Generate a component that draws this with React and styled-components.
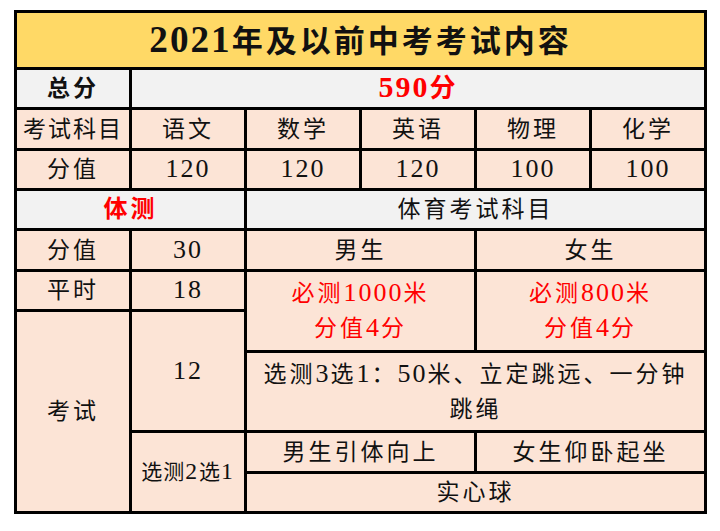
import React from 'react';
import styled, { createGlobalStyle } from 'styled-components';

const GlobalStyle = createGlobalStyle`
  html, body {
    margin: 0;
    padding: 0;
    background: #ffffff;
  }
  body {
    font-family: "Liberation Serif", "Noto Sans CJK SC", serif;
  }
`;

const TONES = {
  title: '#ffd966',
  grey: '#f2f2f2',
  peach: '#fce4d6',
};

const Table = styled.div`
  margin: 10px 0 0 14px;
  width: 693px;
  box-sizing: border-box;
  display: grid;
  grid-template-columns: repeat(6, 1fr);
  grid-template-rows: 54px 37px 38px 37px 37px 38px 37px 38px 77px 38px 37px;
  gap: 3px;
  padding: 3px;
  background: #000000;
`;

const CellBox = styled.div`
  grid-column: ${(p) => p.$col || 'auto'};
  grid-row: ${(p) => p.$row || 'auto'};
  background: ${(p) => TONES[p.$tone || 'peach']};
  color: ${(p) => (p.$red ? '#ff0000' : '#111111')};
  font-size: ${(p) => p.$size || 23}px;
  font-weight: ${(p) => (p.$bold ? 700 : 400)};
  letter-spacing: ${(p) => (p.$spacing != null ? p.$spacing : 3)}px;
  line-height: 35px;
  display: flex;
  align-items: center;
  justify-content: center;
  text-align: center;
  padding: 0 6px;
  white-space: nowrap;
`;

const CellText = styled.span`
  display: block;
`;

// digits in the sheet are set larger than the hanzi
const Num = styled.span`
  font-size: ${(p) => p.$scale || 1.13}em;
  letter-spacing: 2px;
  line-height: 1;
`;

const Cell = ({ children, ...props }) => (
  <CellBox {...props}>
    <CellText>{children}</CellText>
  </CellBox>
);

const nums = (text, scale) =>
  text.split(/(\d+)/).map((part, i) =>
    /^\d+$/.test(part) ? (
      <Num key={i} $scale={scale}>
        {part}
      </Num>
    ) : (
      part
    )
  );

const subjects = [
  { name: '语文', score: '120' },
  { name: '数学', score: '120' },
  { name: '英语', score: '120' },
  { name: '物理', score: '100' },
  { name: '化学', score: '100' },
];

export default function App() {
  return (
    <>
      <GlobalStyle />
      <Table>
        <Cell $col="1 / 7" $tone="title" $size={31} $bold $spacing={3}>
          {nums('2021年及以前中考考试内容', 1.2)}
        </Cell>

        <Cell $tone="grey" $bold>总分</Cell>
        <Cell $col="2 / 7" $tone="grey" $red $bold $size={26} $spacing={2}>
          {nums('590分', 1.15)}
        </Cell>

        <Cell $spacing={2}>考试科目</Cell>
        {subjects.map((s) => (
          <Cell key={s.name}>{s.name}</Cell>
        ))}

        <Cell>分值</Cell>
        {subjects.map((s) => (
          <Cell key={s.name + '-score'}>{nums(s.score)}</Cell>
        ))}

        <Cell $col="1 / 3" $tone="grey" $red $bold $size={24}>体测</Cell>
        <Cell $col="3 / 7" $tone="grey">体育考试科目</Cell>

        <Cell>分值</Cell>
        <Cell>{nums('30')}</Cell>
        <Cell $col="3 / 5">男生</Cell>
        <Cell $col="5 / 7">女生</Cell>

        <Cell>平时</Cell>
        <Cell>{nums('18')}</Cell>
        <Cell $col="3 / 5" $row="7 / 9" $red>
          {nums('必测1000米')}<br />{nums('分值4分')}
        </Cell>
        <Cell $col="5 / 7" $row="7 / 9" $red>
          {nums('必测800米')}<br />{nums('分值4分')}
        </Cell>

        <Cell $col="1" $row="8 / 12">考试</Cell>
        <Cell $col="2" $row="8 / 10">{nums('12')}</Cell>
        <Cell $col="3 / 7" $row="9">
          {nums('选测3选1：50米、立定跳远、一分钟')}<br />跳绳
        </Cell>

        <Cell $col="2" $row="10 / 12" $size={21} $spacing={1}>
          {nums('选测2选1')}
        </Cell>
        <Cell $col="3 / 5" $row="10">男生引体向上</Cell>
        <Cell $col="5 / 7" $row="10">女生仰卧起坐</Cell>
        <Cell $col="3 / 7" $row="11">实心球</Cell>
      </Table>
    </>
  );
}
